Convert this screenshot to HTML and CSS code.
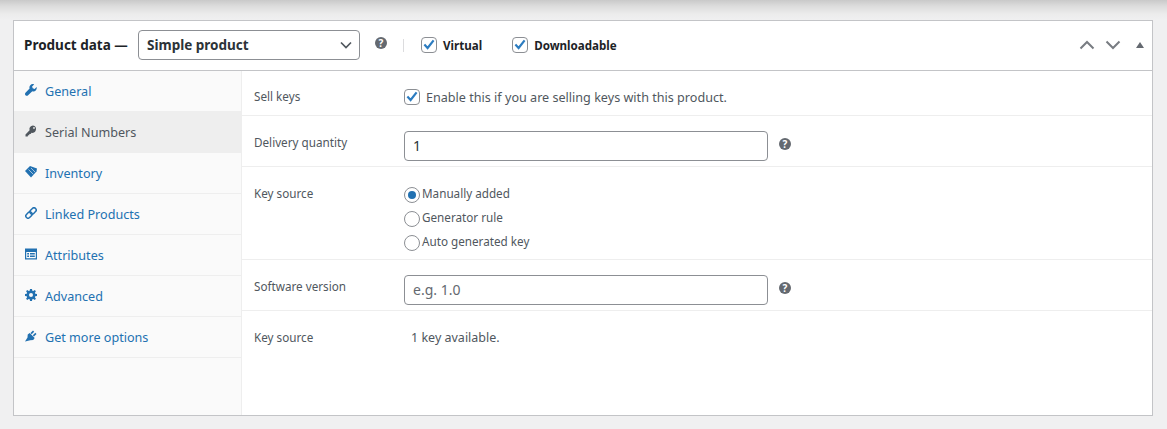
FILE: index.html
```html
<!DOCTYPE html>
<html lang="en">
<head>
    <meta charset="UTF-8">
    <meta name="viewport" content="width=device-width, initial-scale=1.0">
    <title>Product data</title>
    <link rel="stylesheet" href="styles.css">
</head>
<body>
    <div class="panel">
        <div class="panel-head">
            <span class="panel-title">Product data —</span>
            <div class="type-select">
                <span>Simple product</span>
                <svg width="12" height="8" viewBox="0 0 12 8"><path d="M1 1.5l5 5 5-5" fill="none" stroke="#50575e" stroke-width="1.7"/></svg>
            </div>
            <svg class="help help-head" viewBox="0 0 12 12"><circle cx="6" cy="6" r="6"/><text x="6" y="9.5" text-anchor="middle">?</text></svg>
            <span class="head-sep"></span>
            <label class="head-check">
                <span class="check"><svg viewBox="0 0 14 14"><path d="M2.4 6.6L5.6 10l6-7.6"/></svg></span>
                Virtual
            </label>
            <label class="head-check">
                <span class="check"><svg viewBox="0 0 14 14"><path d="M2.4 6.6L5.6 10l6-7.6"/></svg></span>
                Downloadable
            </label>
            <div class="head-arrows">
                <svg width="16" height="10" viewBox="0 0 16 10"><path d="M1.5 8.5L8 2l6.5 6.5"/></svg>
                <svg width="16" height="10" viewBox="0 0 16 10"><path d="M1.5 1.5L8 8l6.5-6.5"/></svg>
                <span class="toggle-arrow"></span>
            </div>
        </div>
        <div class="panel-body">
            <ul class="tabs">
                <li>
                    <svg viewBox="0 0 12 12"><path d="M11.6 2.9L9.6 4.9 7.7 4.3 7.1 2.4 9.1.4C7.7-.2 6.2.2 5.3 1.2 4.4 2.1 4.2 3.4 4.6 4.6L.5 8.7c-.7.7-.7 1.9 0 2.6.7.7 1.9.7 2.6 0l4.2-4.1c1.2.4 2.5.2 3.4-.7 1-1 1.3-2.4.9-3.6z"/></svg>
                    General
                </li>
                <li class="active">
                    <svg viewBox="0 0 12 12"><path fill-rule="evenodd" d="M8 .5a3.6 3.6 0 0 0-3.4 4.8L.5 9.4v2.1h2.2l.3-1.3h1.2l.2-1.3h1.2l1-1.1A3.6 3.6 0 1 0 8 .5zm1 3.3a.9.9 0 1 1 0-1.800.9.9 0 0 1 0 1.800z"/></svg>
                    Serial Numbers
                </li>
                <li>
                    <svg viewBox="0 0 12 12"><path d="M0 5L5 0l7 2.500-.5 3L6 11.500z"/><path d="M3.500 3.500l4.800 4.800M6 2l4.200 4.200" stroke="#fafafa" stroke-width=".6" fill="none"/></svg>
                    Inventory
                </li>
                <li>
                    <svg viewBox="0 0 12 12"><g transform="rotate(-45 6 6)" fill="none" stroke="#2271b1" stroke-width="1.5"><rect x="-.4" y="3.8" width="7" height="4.4" rx="2.2"/><rect x="5.4" y="3.8" width="7" height="4.4" rx="2.2"/></g></svg>
                    Linked Products
                </li>
                <li>
                    <svg viewBox="0 0 12 12"><path fill-rule="evenodd" d="M0 .5h12v11H0zM1.2 4v6.3h9.600V4zM2.2 5H4v1.500H2.200zM5 5h4.800v1.500H5zM2.200 7.500H4V9H2.200zM5 7.500h4.800V9H5z"/></svg>
                    Attributes
                </li>
                <li>
                    <svg viewBox="0 0 12 12"><path fill-rule="evenodd" d="M5 0h2l.3 1.700 1 .4L9.800 1.100l1.100 1.100-1 1.500.4 1L12 5v2l-1.700.3-.4 1 1 1.500-1.100 1.100-1.500-1-1 .4L7 12H5l-.3-1.700-1-.4-1.500 1-1.100-1.100 1-1.500-.4-1L0 7V5l1.700-.3.4-1-1-1.500 1.100-1.100 1.500 1 1-.4zM6 4a2 2 0 1 0 0 4 2 2 0 0 0 0-4z"/></svg>
                    Advanced
                </li>
                <li>
                    <svg viewBox="0 0 12 12"><path d="M0 11.500l2.500-4 .2-3 2-1.500 5 5-1.500 2-3 .2zM5.500 3L8 .5l1.200 1.200-2.500 2.500zM7.800 5.300l2.500-2.500L11.500 4 9 6.500z"/></svg>
                    Get more options
                </li>
            </ul>
            <div class="fields">
                <div class="field field-sell">
                    <span class="field-label">Sell keys</span>
                    <label class="field-check">
                        <span class="check"><svg viewBox="0 0 14 14"><path d="M2.4 6.6L5.6 10l6-7.6"/></svg></span>
                        Enable this if you are selling keys with this product.
                    </label>
                </div>
                <div class="field field-input">
                    <span class="field-label">Delivery quantity</span>
                    <div class="text-input">1</div>
                    <svg class="help" viewBox="0 0 12 12"><circle cx="6" cy="6" r="6"/><text x="6" y="9.5" text-anchor="middle">?</text></svg>
                </div>
                <div class="field field-radios">
                    <span class="field-label">Key source</span>
                    <div class="radios">
                        <label class="radio-row"><span class="radio checked"></span>Manually added</label>
                        <label class="radio-row"><span class="radio"></span>Generator rule</label>
                        <label class="radio-row"><span class="radio"></span>Auto generated key</label>
                    </div>
                </div>
                <div class="field field-input">
                    <span class="field-label">Software version</span>
                    <div class="text-input placeholder">e.g. 1.0</div>
                    <svg class="help" viewBox="0 0 12 12"><circle cx="6" cy="6" r="6"/><text x="6" y="9.5" text-anchor="middle">?</text></svg>
                </div>
                <div class="field field-last">
                    <span class="field-label">Key source</span>
                    <span class="key-count">1 key available.</span>
                </div>
            </div>
        </div>
    </div>
</body>
</html>
```

FILE: styles.css
```css
* {
    box-sizing: border-box;
}
body {
    margin: 0;
    padding: 20px 14px 13px 13px;
    height: 429px;
    overflow: hidden;
    background: linear-gradient(to bottom, #c9c9c9 0, #dcdcdc 6px, #ececec 14px, #f0f0f1 20px);
    font-family: "Noto Sans", sans-serif;
    font-size: 13px;
    color: #50575e;
}
.panel {
    height: 396px;
    background: #fff;
    border: 1px solid #c3c4c7;
    display: flex;
    flex-direction: column;
}
.panel-head {
    height: 50px;
    flex: none;
    display: flex;
    align-items: center;
    padding: 0 10px 1px;
    border-bottom: 1px solid #c3c4c7;
}
.panel-title {
    font-weight: 700;
    font-size: 13.5px;
    color: #1d2327;
    width: 114px;
    white-space: nowrap;
}
.type-select {
    width: 222px;
    height: 30px;
    border: 1px solid #8c8f94;
    border-radius: 4px;
    display: flex;
    align-items: center;
    justify-content: space-between;
    padding: 0 7px 0 8px;
    font-weight: 700;
    font-size: 13.5px;
    color: #2c3338;
}
.help {
    width: 12px;
    height: 12px;
    flex: none;
}
.help circle {
    fill: #646970;
}
.help text {
    fill: #fff;
    font-size: 10px;
    font-weight: 700;
    font-family: "Noto Sans", sans-serif;
}
.help-head {
    margin: -4px 0 0 15px;
}
.head-sep {
    width: 1px;
    height: 13px;
    background: #dcdcde;
    margin-left: 16px;
}
.head-check {
    display: flex;
    align-items: center;
    gap: 6px;
    font-weight: 700;
    font-size: 11.6px;
    color: #1d2327;
    margin-left: 17px;
}
.head-check + .head-check {
    margin-left: 30px;
}
.check {
    width: 16px;
    height: 16px;
    flex: none;
    border: 1px solid #8c8f94;
    border-radius: 4px;
    background: #fff;
    display: block;
}
.check svg {
    display: block;
    width: 14px;
    height: 14px;
}
.check path {
    fill: none;
    stroke: #2c7cc0;
    stroke-width: 2.2;
}
.head-arrows {
    margin-left: auto;
    margin-right: -2px;
    display: flex;
    align-items: center;
    gap: 10px;
}
.head-arrows path {
    fill: none;
    stroke: #787c82;
    stroke-width: 2;
}
.toggle-arrow {
    width: 0;
    height: 0;
    margin-left: 5px;
    margin-top: -1px;
    border-left: 4px solid transparent;
    border-right: 4px solid transparent;
    border-bottom: 6px solid #646970;
}
.panel-body {
    flex: 1;
    display: flex;
    min-height: 0;
}
.tabs {
    width: 228px;
    flex: none;
    margin: 0;
    padding: 0;
    list-style: none;
    background: #fafafa;
    border-right: 1px solid #eee;
    font-size: 12.6px;
}
.tabs li {
    height: 41px;
    display: flex;
    align-items: center;
    padding-left: 11px;
    gap: 8px;
    border-bottom: 1px solid #eee;
    color: #2271b1;
}
.tabs li svg {
    width: 12px;
    height: 12px;
    flex: none;
    fill: #2271b1;
    margin-top: -3px;
}
.tabs li.active {
    background: #eee;
    color: #50575e;
}
.tabs li.active svg {
    fill: #50575e;
}
.fields {
    flex: 1;
    min-width: 0;
}
.field {
    display: flex;
    padding-left: 12px;
    border-bottom: 1px solid #eee;
    font-size: 11.7px;
}
.field-label {
    width: 150px;
    flex: none;
}
.field-sell {
    height: 45px;
    padding-top: 8px;
    align-items: center;
}
.field-sell .field-label {
    margin-top: -2px;
}
.field-check {
    display: flex;
    align-items: center;
    gap: 6px;
    font-size: 12.6px;
}
.field-input {
    height: 51px;
    padding-top: 10px;
    align-items: center;
}
.field-input .field-label {
    margin-top: -8px;
}
.text-input {
    width: 364px;
    height: 30px;
    border: 1px solid #8c8f94;
    border-radius: 4px;
    background: #fff;
    padding: 0 8px;
    line-height: 28px;
    font-size: 14px;
    color: #2c3338;
}
.text-input.placeholder {
    color: #646970;
}
.field-input .help {
    margin-left: 11px;
    margin-top: -5px;
}
.field-radios {
    height: 93px;
    padding-top: 18px;
}
.radios {
    display: flex;
    flex-direction: column;
    gap: 6px;
    margin-top: -1px;
}
.radio-row {
    height: 18px;
    display: flex;
    align-items: center;
    gap: 2px;
}
.radio {
    width: 16px;
    height: 16px;
    margin-top: 3px;
    border: 1px solid #8c8f94;
    border-radius: 50%;
    background: #fff;
    display: flex;
    align-items: center;
    justify-content: center;
}
.radio.checked::before {
    content: "";
    width: 8px;
    height: 8px;
    border-radius: 50%;
    background: #2271b1;
}
.field-last {
    border-bottom: 0;
    padding-top: 18px;
}
.key-count {
    margin-left: 7px;
    font-size: 12.5px;
}
```
